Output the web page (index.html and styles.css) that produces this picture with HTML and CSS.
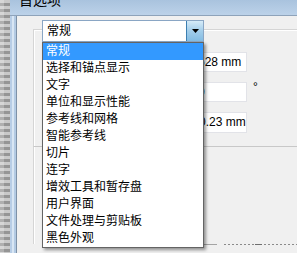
FILE: index.html
```html
<!DOCTYPE html>
<html lang="zh-CN">
<head>
  <meta charset="UTF-8">
  <title>首选项</title>
  <link rel="stylesheet" href="styles.css">
</head>
<body>
  <div class="desk"></div>
  <div class="window">
    <div class="titlebar"><span class="title">首选项</span></div>
    <div class="frame">
      <div class="client">
        <div class="group">
          <div class="combo">
            <span class="combo-value">常规</span>
            <span class="combo-btn">
              <svg width="7" height="4" viewBox="0 0 7 4"><path d="M0 0h7L3.5 4z" fill="#000"/></svg>
            </span>
            <ul class="droplist">
              <li class="selected">常规</li>
              <li>选择和锚点显示</li>
              <li>文字</li>
              <li>单位和显示性能</li>
              <li>参考线和网格</li>
              <li>智能参考线</li>
              <li>切片</li>
              <li>连字</li>
              <li>增效工具和暂存盘</li>
              <li>用户界面</li>
              <li>文件处理与剪贴板</li>
              <li>黑色外观</li>
            </ul>
          </div>
          <div class="field-row"><div class="field">528 mm</div></div>
          <div class="field-row"><div class="field">0</div><span class="unit">°</span></div>
          <div class="field-row"><div class="field field-tall">0.23 mm</div></div>
        </div>
        <div class="group-lower"></div>
        <div class="dotted"></div>
      </div>
    </div>
  </div>
</body>
</html>
```

FILE: styles.css
```css
/* Page */
body {
  margin: 0;
  width: 297px;
  height: 253px;
  overflow: hidden;
  display: flex;
  font-family: "Liberation Sans", "Noto Sans CJK SC", sans-serif;
  font-size: 12px;
  color: #000;
}

/* Blurred desktop strip on the left */
.desk {
  flex: none;
  width: 10px;
  background:
    linear-gradient(to right, rgba(255,255,255,0.25) 0 4px, transparent 4px),
    repeating-linear-gradient(to bottom, #c9c9c9 0 3px, #959595 3px 6px);
}

/* Window frame */
.window {
  flex: 1;
  display: flex;
  flex-direction: column;
  min-width: 0;
}

.titlebar {
  flex: none;
  height: 15px;
  padding-left: 9px;
  border-bottom: 1px solid #8ea3ba;
  background: linear-gradient(#a9c3de, #bcd2e9);
  overflow: hidden;
}

.title {
  display: block;
  margin-top: -7px;
  font-size: 14px;
  line-height: 14px;
}

.frame {
  flex: 1;
  display: flex;
  padding-left: 6px;
  background: linear-gradient(to right, #b7cde6 0 2px, #d8e6f4 2px 4px, #b3cae3 4px);
}

.client {
  flex: 1;
  padding: 13px 0 0 16px;
  border-left: 1px solid #7d91a7;
  background: #f0f0f0;
  min-width: 0;
}

/* Group boxes */
.group {
  width: 400px;
  height: 116px;
  border-top: 1px solid #d5d5d5;
  border-left: 1px solid #d5d5d5;
  border-bottom: 1px solid #c8c8c8;
  box-shadow: inset 1px 1px 0 #fff;
}

.group-lower {
  height: 97px;
  border-left: 1px solid #d5d5d5;
  box-shadow: inset 1px 0 0 #fff;
}

.dotted {
  height: 1px;
  background:
    linear-gradient(to right, transparent 0 170px, #a4a4a4 170px 184px, transparent 184px),
    linear-gradient(to right, transparent 0 222px, #6e6e6e 222px 229px, transparent 229px),
    repeating-linear-gradient(to right, #8a8a8a 0 2px, transparent 2px 4px);
  background-size: 100% 1px, 100% 1px, 75px 1px;
  background-position: 0 0, 0 0, 191px 0;
  background-repeat: no-repeat;
}

/* Combo box */
.combo {
  position: relative;
  box-sizing: border-box;
  width: 162px;
  height: 22px;
  margin: -10px 0 0 8px;
  border: 1px solid #8aa6c4;
  background: #fff;
}

.combo-value {
  display: block;
  padding-left: 4px;
  line-height: 20px;
}

.combo-btn {
  position: absolute;
  top: 0;
  right: 0;
  bottom: 0;
  width: 16px;
  display: flex;
  align-items: center;
  justify-content: center;
  border-left: 1px solid #3c7fb1;
  background: linear-gradient(#d6ebf8, #a2cdea 50%, #83bce3);
}

.droplist {
  position: absolute;
  top: 21px;
  left: -1px;
  z-index: 2;
  box-sizing: border-box;
  width: 162px;
  margin: 0;
  padding: 0;
  list-style: none;
  border: 1px solid #646464;
  background: #fff;
  box-shadow: 2px 2px 3px rgba(0, 0, 0, 0.4);
}

.droplist li {
  height: 17px;
  padding-left: 3px;
  line-height: 17px;
  white-space: nowrap;
}

.droplist li.selected {
  background: #3399ff;
  color: #fff;
}

/* Fields on the right */
.field-row {
  display: flex;
  align-items: flex-start;
  margin: 10px 0 0 156px;
}

.field {
  box-sizing: border-box;
  width: 57px;
  height: 20px;
  padding: 0 1px 0 7px;
  border: 1px solid #e2e3e8;
  background: #fff;
  line-height: 18px;
  white-space: nowrap;
  overflow: hidden;
}

.field-tall {
  height: 21px;
  line-height: 19px;
  text-indent: 1px;
}

.unit {
  margin-left: 6px;
  line-height: 10px;
}
```
